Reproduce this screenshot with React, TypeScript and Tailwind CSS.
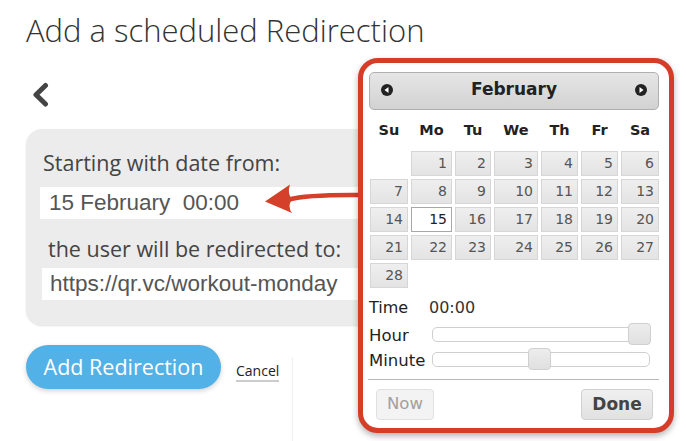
import React from "react";

const rows: (number | null)[][] = [
  [null, 1, 2, 3, 4, 5, 6],
  [7, 8, 9, 10, 11, 12, 13],
  [14, 15, 16, 17, 18, 19, 20],
  [21, 22, 23, 24, 25, 26, 27],
  [28],
];
const names = ["Su", "Mo", "Tu", "We", "Th", "Fr", "Sa"];

function CircleTri({ dir }: { dir: "l" | "r" }) {
  return (
    <svg width="12" height="12" viewBox="0 0 12 12">
      <circle cx="6" cy="6" r="6" fill="#222" />
      {dir === "l" ? (
        <polygon points="3.5,6 7.5,3 7.5,9" fill="#fff" />
      ) : (
        <polygon points="8.5,6 4.5,3 4.5,9" fill="#fff" />
      )}
    </svg>
  );
}

function Slider({ left }: { left: number }) {
  return (
    <div className="relative h-[15px] w-[218px] rounded-[5px] border border-[#cfcfcf] bg-white">
      <div
        className="absolute top-[-5px] h-[22px] w-[23px] rounded-[4px] border border-[#d0d0d0] bg-linear-to-b from-[#ededed] to-[#e0e0e0]"
        style={{ left }}
      />
    </div>
  );
}

export default function App() {
  const os = { fontFamily: '"Open Sans", sans-serif' };
  const lib = { fontFamily: '"Liberation Sans", Arial, sans-serif' };
  return (
    <div className="relative h-[441px] w-[686px] overflow-hidden bg-white">
      <div style={os} className="pl-[26px] pt-[9px]">
        <h1 className="text-[31px] font-light leading-[42px] text-[#333]">
          Add a scheduled Redirection
        </h1>
        <div className="mt-[31px] ml-[6px] h-[26px]">
          <svg width="18" height="26" viewBox="0 0 18 26">
            <polyline
              points="13.5,3.5 4,12.8 13.5,22"
              fill="none"
              stroke="#444"
              strokeWidth="5"
              strokeLinecap="round"
              strokeLinejoin="round"
            />
          </svg>
        </div>
        <div className="mt-[21px] w-[400px] rounded-[16px] bg-[#ececec] pb-[25px] pt-[19px] shadow-[0_1px_2px_rgba(0,0,0,0.12)]">
          <div className="pl-[17px] text-[21.5px] leading-[29px] text-[#444]">
            Starting with date from:
          </div>
          <div
            style={lib}
            className="ml-[14px] mt-[10px] h-[32px] whitespace-pre bg-white pl-[9px] text-[22.5px] leading-[32px] text-[#555]"
          >
            {"15 February  00:00"}
          </div>
          <div className="mt-[15px] pl-[22px] text-[21.5px] leading-[29px] text-[#444]">
            the user will be redirected to:
          </div>
          <div
            style={lib}
            className="ml-[16px] mt-[5px] h-[32px] bg-white pl-[8px] text-[22.5px] leading-[32px] text-[#555]"
          >
            https://qr.vc/workout-monday
          </div>
        </div>
        <div className="mt-[20px] flex items-start">
          <button className="h-[44px] w-[195px] rounded-full bg-[#52b1e7] text-[21.5px] leading-[44px] text-white shadow-[0_2px_5px_rgba(0,0,0,0.18)]">
            Add Redirection
          </button>
          <span className="ml-[15px] mt-[17px] border-b-2 border-[#cccccc] text-[14px] leading-[18px] text-[#222]">
            Cancel
          </span>
          <div className="ml-[13px] mt-[12px] h-[100px] w-px bg-[#f0f0f0]" />
        </div>
      </div>

      {/* arrow annotation */}
      <svg
        className="absolute left-[262px] top-[180px]"
        width="100"
        height="40"
        viewBox="0 0 100 40"
      >
        <path
          d="M27 19.5 Q 45 14.5 98 15"
          fill="none"
          stroke="#d5402a"
          strokeWidth="4.5"
        />
        <path d="M3 21.5 L28 4.5 Q 25 13 30 19.5 Q 25 26 30 33 Z" fill="#d5402a" />
      </svg>

      {/* date picker popup */}
      <div
        style={{ fontFamily: '"DejaVu Sans", Verdana, sans-serif' }}
        className="absolute left-[358px] top-[58px] h-[375px] w-[316px] rounded-[20px] border-[5px] border-[#d63d28] bg-white pl-[6px] pr-[10px] pt-[9px] shadow-[0_3px_6px_rgba(0,0,0,0.3)]"
      >
        <div className="flex h-[38px] items-center justify-between rounded-[5px] border border-[#b0b0b0] bg-linear-to-b from-[#e6e6e6] to-[#d2d2d2] px-[11px] pb-[3px]">
          <CircleTri dir="l" />
          <span className="text-[17px] font-bold text-[#222]">February</span>
          <CircleTri dir="r" />
        </div>
        <div className="grid h-[38px] grid-cols-[38px_41px_36px_44px_37px_37px_38px] gap-x-[3px] pl-[1px] pt-[4px]">
          {names.map((n) => (
            <div
              key={n}
              className="flex items-center justify-center text-[14.5px] font-bold text-[#222]"
            >
              {n}
            </div>
          ))}
        </div>
        <div className="mt-[3px] grid grid-cols-[38px_41px_36px_44px_37px_37px_38px] gap-[3px] pl-[1px]">
          {rows.flat().map((d, i) =>
            d === null ? (
              <div key={i} className="h-[25px]" />
            ) : d === 15 ? (
              <div
                key={i}
                className="h-[25px] border border-[#a8a8a8] bg-white pr-[4px] text-right text-[14px] leading-[23px] text-[#212121]"
              >
                {d}
              </div>
            ) : (
              <div
                key={i}
                className="h-[25px] border border-[#d6d6d6] bg-linear-to-b from-[#efefef] to-[#e3e3e3] pr-[4px] text-right text-[14px] leading-[23px] text-[#555]"
              >
                {d}
              </div>
            )
          )}
        </div>
        <div className="mt-[10px] flex h-[20px] items-center text-[16px] text-[#222]">
          <span className="w-[60px]">Time</span>
          <span className="text-[#333]">00:00</span>
        </div>
        <div className="mt-[4px] flex h-[25px] items-center text-[16.5px] text-[#222]">
          <span className="w-[63px] translate-y-[2px]">Hour</span>
          <Slider left={195} />
        </div>
        <div className="flex h-[25px] items-center text-[16.5px] text-[#222]">
          <span className="w-[63px] translate-y-[2px]">Minute</span>
          <Slider left={95} />
        </div>
        <div className="ml-[-1px] mt-[7px] h-px w-[291px] bg-[#b8b8b8]" />
        <div className="mt-[9px] flex justify-between pl-[7px] pr-[6px]">
          <button className="h-[31px] w-[58px] rounded-[4px] border border-[#e0e0e0] bg-[#f3f3f3] text-[16.5px] text-[#a0a0a0]">
            Now
          </button>
          <button className="h-[31px] w-[72px] rounded-[4px] border border-[#d0d0d0] bg-linear-to-b from-[#f0f0f0] to-[#e1e1e1] text-[17px] font-bold text-[#444]">
            Done
          </button>
        </div>
      </div>
    </div>
  );
}
